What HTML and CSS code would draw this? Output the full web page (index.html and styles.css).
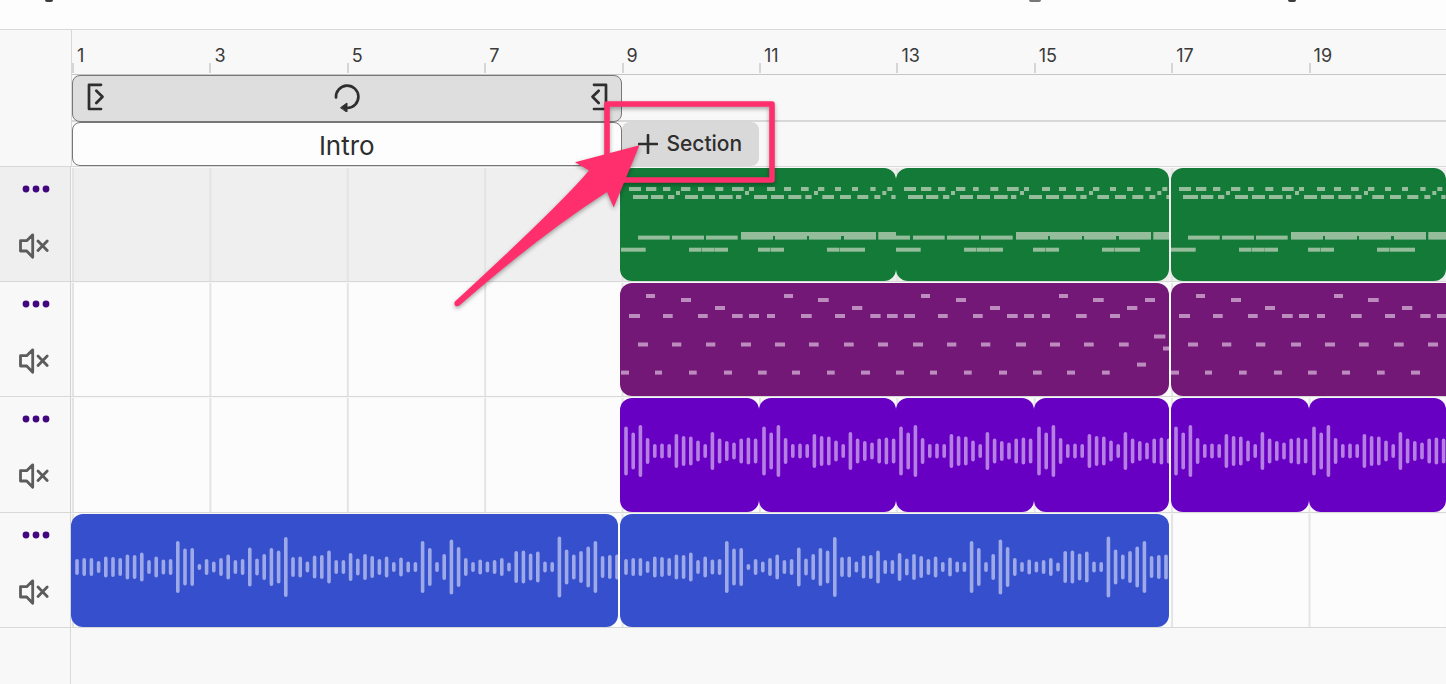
FILE: index.html
```html
<!DOCTYPE html>
<html lang="en">
<head>
<meta charset="utf-8">
<title>Timeline</title>
<link rel="stylesheet" href="styles.css">
</head>
<body>
<svg class="defs" aria-hidden="true">
  <symbol id="dots" viewBox="0 0 30 8"><circle cx="6" cy="4" r="3.4"/><circle cx="16" cy="4" r="3.4"/><circle cx="26" cy="4" r="3.4"/></symbol>
  <symbol id="mute" viewBox="1 0 30 26"><path d="M1.5 7.7V18H7.7L13.7 24.2V1.8L7.7 7.7ZM19 8L28.2 17.4M28.2 8L19 17.4"/></symbol>
  <symbol id="edge" viewBox="0 0 18 28"><path d="M14 1.8H2V26H14M9.3 7.7L15.5 13.7L9.3 20"/></symbol>
</svg>
<header class="topbar"><span class="mark"></span><span class="mark mark-wide"></span><span class="mark mark-end"></span></header>
<main class="editor">
  <div class="corner"></div>
  <div class="head">
    <ol class="ruler">
      <li>1</li><li>3</li><li>5</li><li>7</li><li>9</li><li>11</li><li>13</li><li>15</li><li>17</li><li>19</li>
    </ol>
    <div class="cycle-row">
      <div class="cycle">
        <button class="icon-btn" aria-label="Cycle start"><svg class="edge"><use href="#edge"/></svg></button>
        <button class="icon-btn" aria-label="Toggle cycle"><svg class="loop" viewBox="0 0 28 30"><path d="M3 15.5A11.2 11.2 0 1 1 14.2 26"/><path class="solid" d="M7.800 25.500L14 21V30Z"/></svg></button>
        <button class="icon-btn" aria-label="Cycle end"><svg class="edge flip"><use href="#edge"/></svg></button>
      </div>
    </div>
    <div class="section-row">
      <button class="section">Intro</button>
      <button class="add-section"><svg class="plus" viewBox="0 0 20 20"><path d="M10 1V19M1 10H19"/></svg>Section</button>
    </div>
  </div>

  <div class="track-head selected"><button class="icon-btn" aria-label="Track menu"><svg class="dots"><use href="#dots"/></svg></button><button class="icon-btn" aria-label="Mute"><svg class="mute"><use href="#mute"/></svg></button></div>
  <div class="lane selected">
    <div class="clip green span-2 from-9 lead" data-part="keys"></div>
    <div class="clip green span-2 tail" data-part="keysNext"></div>
    <div class="clip green span-2" data-part="keys"></div>
  </div>

  <div class="track-head"><button class="icon-btn" aria-label="Track menu"><svg class="dots"><use href="#dots"/></svg></button><button class="icon-btn" aria-label="Mute"><svg class="mute"><use href="#mute"/></svg></button></div>
  <div class="lane">
    <div class="clip plum span-4 from-9 lead tail" data-part="arp"></div>
    <div class="clip plum span-2 open" data-part="arpShort"></div>
  </div>

  <div class="track-head"><button class="icon-btn" aria-label="Track menu"><svg class="dots"><use href="#dots"/></svg></button><button class="icon-btn" aria-label="Mute"><svg class="mute"><use href="#mute"/></svg></button></div>
  <div class="lane">
    <div class="clip violet from-9 lead" data-wave="drums"></div>
    <div class="clip violet" data-wave="drums"></div>
    <div class="clip violet" data-wave="drums"></div>
    <div class="clip violet tail" data-wave="drums"></div>
    <div class="clip violet" data-wave="drums"></div>
    <div class="clip violet" data-wave="drums"></div>
  </div>

  <div class="track-head"><button class="icon-btn" aria-label="Track menu"><svg class="dots"><use href="#dots"/></svg></button><button class="icon-btn" aria-label="Mute"><svg class="mute"><use href="#mute"/></svg></button></div>
  <div class="lane">
    <div class="clip blue span-4 first" data-wave="guitar"></div>
    <div class="clip blue span-4 lead tail" data-wave="guitar"></div>
  </div>

  <div class="rest-head"></div>
  <div class="rest"></div>
</main>
<svg class="callout" viewBox="0 0 340 230" aria-hidden="true">
  <rect x="167" y="14" width="165" height="76"/>
  <path d="M199.5 55.3L135 72.3L149 80.5Q120 115 15 211.5Q13.500 214 15.500 216Q18 217 20 215Q100 145 167 102L173.700 117.500Z"/>
</svg>
<script src="clips.js"></script>
</body>
</html>
```
FILE: styles.css
```css
* { box-sizing: border-box; }
html, body { height: 100%; }
body {
  margin: 0;
  display: flex;
  flex-direction: column;
  position: relative;
  overflow: hidden;
  background: #f8f8f8;
  color: #2e2e2e;
  font-family: Inter, "Liberation Sans", sans-serif;
}
button { font: inherit; color: inherit; border: 0; padding: 0; margin: 0; background: none; cursor: pointer; }
svg { display: block; fill: none; stroke-linecap: round; stroke-linejoin: round; }
.defs { position: absolute; width: 0; height: 0; }

.topbar {
  flex: none;
  display: flex;
  align-items: flex-start;
  height: 30px;
  padding: 0 150px 0 45px;
  background: #fdfdfd;
  border-bottom: 1px solid #d8d8d8;
}
.mark { width: 8px; height: 2px; border-radius: 0 0 4px 4px; background: #3c3c3c; }
.mark-wide { width: 12px; margin-left: auto; background: #777; }
.mark-end { margin-left: 247px; }

.editor {
  flex: 1;
  display: grid;
  grid-template-columns: 71px 1fr;
  grid-template-rows: auto repeat(2, 115px) 116px 115px 1fr;
}
.corner { border-bottom: 1px solid #d8d8d8; }
.head { border-left: 1px solid #d8d8d8; }
.ruler, .cycle-row, .section-row, .lane { display: grid; grid-template-columns: repeat(10, 1fr); }
.ruler { height: 45px; margin: 0; padding: 0; list-style: none; border-bottom: 1px solid #c6c6c6; }
.ruler li {
  padding: 14px 0 0 5px;
  color: #3a3a3a;
  font-size: 18px;
  line-height: 24px;
  background: linear-gradient(#d6d6d6, #d6d6d6) left bottom 1px / 2px 10px no-repeat;
}
.cycle-row { height: 47px; border-bottom: 2px solid #d8d8d8; }
.section-row { height: 45px; border-bottom: 1px solid #d8d8d8; }
.cycle, .section { grid-column: span 4; border: 1px solid #777; border-radius: 8px; }
.cycle {
  display: flex;
  align-items: center;
  justify-content: space-between;
  height: 47px;
  padding: 0 13px 3px 14px;
  background: #dedede;
}
.section { height: 44px; background: #fdfdfd; font-size: 26px; line-height: 32px; padding-top: 3px; }
.add-section {
  display: flex;
  align-items: center;
  justify-content: center;
  gap: 8px;
  border-radius: 8px;
  background: #d9d9d9;
  font-size: 21px;
  font-weight: 500;
  line-height: 24px;
}
.edge { width: 18px; height: 28px; stroke: #2e2e2e; stroke-width: 2.7; }
.flip { transform: scaleX(-1); }
.loop { width: 28px; height: 30px; stroke: #2e2e2e; stroke-width: 2.7; }
.loop .solid { fill: #2e2e2e; stroke-width: 1; }
.plus { width: 20px; height: 20px; stroke: #2e2e2e; stroke-width: 2.6; }

.track-head {
  display: flex;
  flex-direction: column;
  align-items: center;
  gap: 32px;
  padding-top: 12px;
  border-right: 1px solid #d4d4d4;
  border-bottom: 1px solid #d8d8d8;
}
.track-head .icon-btn { height: 20px; display: flex; align-items: center; justify-content: center; }
.track-head .icon-btn + .icon-btn { height: 30px; }
.dots { width: 30px; height: 8px; fill: #42077e; }
.mute { width: 30px; height: 26px; overflow: visible; stroke: #5c5c5c; stroke-width: 2.8; }
.mute use { overflow: visible; }
#mute { overflow: visible; }
.lane {
  padding: 1px 0 0 1px;
  border-bottom: 1px solid #d8d8d8;
  background: linear-gradient(90deg, #e4e4e4 2px, transparent 2px) 0 0 / 10% 100% content-box content-box #fcfcfc;
  background-clip: content-box, border-box;
  background-color: #fcfcfc;
}
.lane.selected, .track-head.selected { background-color: #efefef; }
.rest-head { border-right: 1px solid #d8d8d8; }

.clip { overflow: hidden; border-radius: 12px; min-width: 0; }
.clip svg { width: 100%; height: 100%; }
.span-2 { grid-column-end: span 2; }
.span-4 { grid-column-end: span 4; }
.from-9 { grid-column-start: 5; }
.lead { margin-left: -2px; padding-left: 1px; }
.tail { margin-right: 2px; }
.first { margin: 0 4px 0 -1px; padding-left: 1px; }
.open { border-radius: 12px 0 0 12px; }
.green { background: #137a38; fill: #95bd9c; }
.plum { background: #741878; fill: #bc8cbe; }
.violet { background: #6800c3; stroke: #b680e3; }
.blue { background: #3650cd; stroke: #9ea9e7; }
.clip svg { fill: inherit; stroke-width: 3.6; }

.callout {
  position: absolute;
  left: 440px;
  top: 90px;
  width: 340px;
  height: 230px;
  pointer-events: none;
  filter: drop-shadow(0 2px 2px rgba(0, 0, 0, 0.35));
}
.callout rect { stroke: #ff2f6d; stroke-width: 5.6; }
.callout path { fill: #ff2f6d; }
```
FILE: clips.js
```js
// Note positions are in thirds of a pixel, with a lead-in of 18.
// Each row: y of the row, then [start, end] pairs.
const keys = [
  [19, [[42,78],[93,124],[144,166],[198,226],[249,266],[301,325],[351,386],[402,417],[456,480],[507,528],[558,581],[609,628],[660,678],[711,729],[766,782],[817,832]]],
  [23, [[183,195],[390,402],[597,609],[802,814]]],
  [27, [[54,99],[108,145],[159,178],[210,249],[261,300],[312,353],[363,379],[417,456],[468,507],[520,559],[571,590],[622,657],[675,708],[727,760],[778,796],[829,842]]],
  [64, [[378,783],[790,850]]],
  [67.6, [[69,164],[171,267],[273,368],[378,474],[480,576],[582,678],[687,783],[790,850]]],
  [79.7, [[18,92],[222,259],[260,297],[298,339],[429,466],[467,507],[636,673],[674,750]]]
];
const keysNext = keys.concat([[67.6, [[18,60]]]]);

const arpBase = [
  [11, [[93,120],[507,534]]],
  [15, [[198,228],[609,641]]],
  [23, [[300,330],[711,742]]],
  [31, [[42,75],[144,173],[249,278],[351,383],[402,432],[456,480],[558,590],[660,690]]],
  [59.5, [[69,99],[171,199],[273,301],[378,408],[480,510],[582,611],[687,716]]],
  [87.6, [[18,42],[120,141],[222,245],[327,351],[429,455],[531,555],[636,659]]]
];
const arpShort = arpBase.concat([
  [31, [[766,797],[816,848]]], [59.5, [[789,819]]], [87.6, [[738,765]]]
]);
const arpEnding = arpBase.concat([
  [15, [[765,795]]], [51.5, [[792,826]]], [63.5, [[819,850]]], [79.6, [[741,768]]]
]);
const shift = (rows, by) => rows.map(([y, notes]) => [y, notes.map(([a, b]) => [a + by, b + by])]);
const parts = { keys, keysNext, arpShort, arp: arpShort.concat(shift(arpEnding, 825)) };

const waves = {
  drums: [49,37,52,26,14,15,14,34,30,29,21,14,38,25,20,17,25,27,25],
  guitar: [16,18,18,12,21,20,18,25,24,29,14,21,15,16,52,37,38,6,16,11,18,25,14,16,39,17,26,38,33,60,20,21,11,
    23,24,33,14,14,28,17,26,22,16,21,10,19,11,10,52,38,10,26,55,40,18,10,15,11,14,18,9,32,33,27,31,11,10,61,
    35,25,32,41,52,22,24,25]
};

const svg = body => '<svg aria-hidden="true">' + body + '</svg>';

document.querySelectorAll('[data-part]').forEach(clip => {
  clip.innerHTML = svg(parts[clip.dataset.part].map(([y, notes]) =>
    notes.map(([a, b]) => `<rect x="${((a - 18) / 3).toFixed(1)}" y="${y}" width="${((b - a) / 3).toFixed(1)}" height="4"/>`).join('')
  ).join(''));
});

document.querySelectorAll('[data-wave]').forEach(clip => {
  const d = waves[clip.dataset.wave].map((h, i) =>
    `M${(5 + i * 7.2).toFixed(1)} ${53 - (h - 3.6) / 2}v${(h - 3.6).toFixed(1)}`).join('');
  clip.innerHTML = svg(`<path d="${d}"/>`);
});
```
